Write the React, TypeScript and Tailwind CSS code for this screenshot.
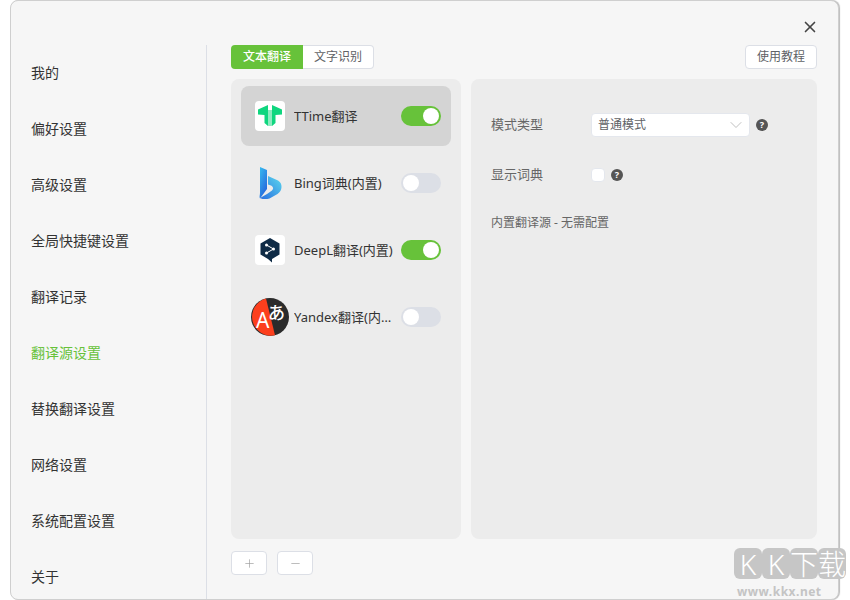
import React from 'react';
import { ChevronDown, Minus, Plus, X } from 'lucide-react';

const FONT = 'font-["Noto_Sans","Noto_Sans_CJK_SC",sans-serif]';

const menu = ['我的', '偏好设置', '高级设置', '全局快捷键设置', '翻译记录', '翻译源设置', '替换翻译设置', '网络设置', '系统配置设置', '关于'];

const TTimeIcon = () => (
  <div className="w-[30px] h-[30px] rounded bg-white">
    <svg width="30" height="30" viewBox="0 0 30 30">
      <path d="M3 8.500l10-4.500v21l-3.500-3v-8l-6.500-.5z" fill="#0fd67f" />
      <path d="M27 8.500l-10-4.500v21l3.500-3v-8l6.500-.5z" fill="#0fd67f" />
      <path d="M13 9h4v16h-4z" fill="#8debc0" />
    </svg>
  </div>
);

const BingIcon = () => (
  <div className="w-[30px] h-[30px] flex items-center justify-center">
    <svg width="24" height="32" viewBox="0 0 24 32">
      <defs>
        <linearGradient id="bingA" x1="0" y1="0" x2="0.6" y2="1">
          <stop offset="0" stopColor="#37bdf0" />
          <stop offset="1" stopColor="#2566dc" />
        </linearGradient>
        <linearGradient id="bingB" x1="0" y1="1" x2="1" y2="0">
          <stop offset="0" stopColor="#2a6fe0" />
          <stop offset="1" stopColor="#5ad8ee" />
        </linearGradient>
      </defs>
      <path d="M2 0l7 3v19l-7 9.500C1 30 2 28 2 26z" fill="url(#bingA)" />
      <path d="M10 9l10 4.500c3 2 3.500 4 3.500 6.500 0 3-1.500 5-4 7l-8 4.500c-3 1-7.500 1-9.500-.5l7-4 5-3.500c2-2 1-4-1-5l-3-1z" fill="url(#bingB)" />
    </svg>
  </div>
);

const DeepLIcon = () => (
  <div className="w-[30px] h-[30px] rounded bg-white flex items-center justify-center">
    <svg width="22" height="26" viewBox="0 0 22 26">
      <path d="M11 1l9.500 5.500v11L13 22v3.500L9 22l-7.500-4.500v-11z" fill="#0f2b46" />
      <circle cx="7.500" cy="8" r="1.500" fill="#fff" />
      <circle cx="7.500" cy="16" r="1.500" fill="#fff" />
      <circle cx="14.500" cy="12" r="1.500" fill="#fff" />
      <path d="M7.500 8l7 4-7 4" stroke="#fff" strokeWidth="1" fill="none" />
    </svg>
  </div>
);

const YandexIcon = () => (
  <div className="w-[30px] h-[30px] flex items-center justify-center">
    <svg width="38" height="38" viewBox="0 0 38 38" className="shrink-0">
      <circle cx="19" cy="19" r="19" fill="#2b2b2b" />
      <path d="M15 0.400 A19 19 0 0 0 24 37.300z" fill="#fc3f1d" />
      <text x="5" y="30" fontSize="21" fill="#fff" fontFamily="Noto Sans">A</text>
      <text x="17" y="21" fontSize="17" fontWeight="500" fill="#fff" fontFamily="Noto Sans CJK JP">あ</text>
    </svg>
  </div>
);

const Toggle = ({ on }: { on: boolean }) => (
  <div className={`ml-auto shrink-0 w-10 h-5 rounded-full p-[2px] flex ${on ? 'bg-[#67c23a] justify-end' : 'bg-[#dcdfe6] justify-start'}`}>
    <div className="w-4 h-4 rounded-full bg-white" />
  </div>
);

const Help = () => (
  <span className="w-3 h-3 rounded-full bg-[#555] text-white text-[9px] leading-3 font-bold text-center">?</span>
);

const sources = [
  { name: 'TTime翻译', icon: <TTimeIcon />, on: true, active: true },
  { name: 'Bing词典(内置)', icon: <BingIcon />, on: false },
  { name: 'DeepL翻译(内置)', icon: <DeepLIcon />, on: true },
  { name: 'Yandex翻译(内置)', icon: <YandexIcon />, on: false },
];

const WatermarkChar = ({ c }: { c: string }) => (
  <span className="w-7 h-[31px] rounded-md bg-[#c6c6c6] flex items-center justify-center text-[28px] leading-none font-light text-white">{c}</span>
);

export default function App() {
  return (
    <div className={`w-[850px] h-[600px] overflow-hidden bg-white pl-[10px] pr-[11px] ${FONT}`}>
      <div className="relative h-[600px] flex rounded-lg border border-[#cfcfcf] bg-[#f6f6f6] shadow-[1px_0_1px_#bbb]">
        {/* Side menu */}
        <div className="w-[196px] shrink-0 mt-[44px] border-r border-[#dcdfe6] pl-5">
          {menu.map((label) => (
            <div key={label} className={`h-14 flex items-center text-sm ${label === '翻译源设置' ? 'text-[#67c23a]' : 'text-[#333]'}`}>
              {label}
            </div>
          ))}
        </div>

        {/* Main */}
        <div className="flex-1 min-w-0 pl-6 pr-[21px] pt-[44px] flex flex-col">
          <div className="flex justify-between h-6">
            <div className="flex text-xs">
              <div className="w-[72px] flex items-center justify-center rounded-l bg-[#67c23a] text-white font-medium">文本翻译</div>
              <div className="w-[71px] flex items-center justify-center rounded-r border border-l-0 border-[#dcdfe6] bg-white text-[#606266]">文字识别</div>
            </div>
            <div className="w-[72px] flex items-center justify-center rounded border border-[#dcdfe6] bg-white text-xs text-[#606266]">使用教程</div>
          </div>

          <div className="mt-[10px] h-[460px] flex gap-[10px]">
            <div className="w-[230px] shrink-0 rounded-lg bg-[#ececec] px-[10px] pt-[7px] flex flex-col gap-[7px]">
              {sources.map((s) => (
                <div key={s.name} className={`h-[60px] rounded-lg flex items-center pl-[14px] pr-[10px] ${s.active ? 'bg-[#d4d4d4]' : ''}`}>
                  {s.icon}
                  <span className="ml-[9px] w-[101px] pt-[1px] truncate text-[13px] text-[#333]">{s.name}</span>
                  <Toggle on={s.on} />
                </div>
              ))}
            </div>

            <div className="flex-1 rounded-lg bg-[#ececec] pl-5 pt-[34px]">
              <div className="flex items-center h-6 text-[13px] text-[#666]">
                <span className="w-[100px]">模式类型</span>
                <div className="w-[159px] h-6 rounded bg-white border border-[#e4e7ed] flex items-center justify-between pl-[6px] pr-[3px] text-xs text-[#606266]">
                  普通模式
                  <ChevronDown size={20} strokeWidth={0.9} className="text-[#aaa]" />
                </div>
                <span className="ml-[6px] flex"><Help /></span>
              </div>
              <div className="mt-[26px] flex items-center h-6 text-[13px] text-[#666]">
                <span className="w-[100px]">显示词典</span>
                <div className="w-[14px] h-[14px] rounded-sm bg-white border border-[#e4e7ed]" />
                <span className="ml-[6px] flex"><Help /></span>
              </div>
              <div className="mt-[28px] text-xs text-[#666]">内置翻译源 - 无需配置</div>
            </div>
          </div>

          <div className="mt-3 flex gap-[10px]">
            <div className="w-9 h-6 rounded border border-[#dcdfe6] bg-white flex items-center justify-center text-[#999]">
              <Plus size={13} strokeWidth={1.2} />
            </div>
            <div className="w-9 h-6 rounded border border-[#dcdfe6] bg-white flex items-center justify-center text-[#999]">
              <Minus size={13} strokeWidth={1.2} />
            </div>
          </div>
        </div>

        {/* Close */}
        <X size={18} strokeWidth={2.2} className="absolute top-[17px] right-[19px] text-[#444]" />

        {/* Watermark */}
        <div className="absolute left-[723px] top-[547px] w-[120px] flex flex-col items-start">
          <div className="flex">
            <WatermarkChar c="K" />
            <WatermarkChar c="K" />
            <WatermarkChar c="下" />
            <WatermarkChar c="载" />
          </div>
          <div className="mt-[5px] pl-[3px] text-[12px] leading-4 font-bold tracking-[0.5px] text-[#c4c4c4]">www.kkx.net</div>
        </div>
      </div>
    </div>
  );
}
